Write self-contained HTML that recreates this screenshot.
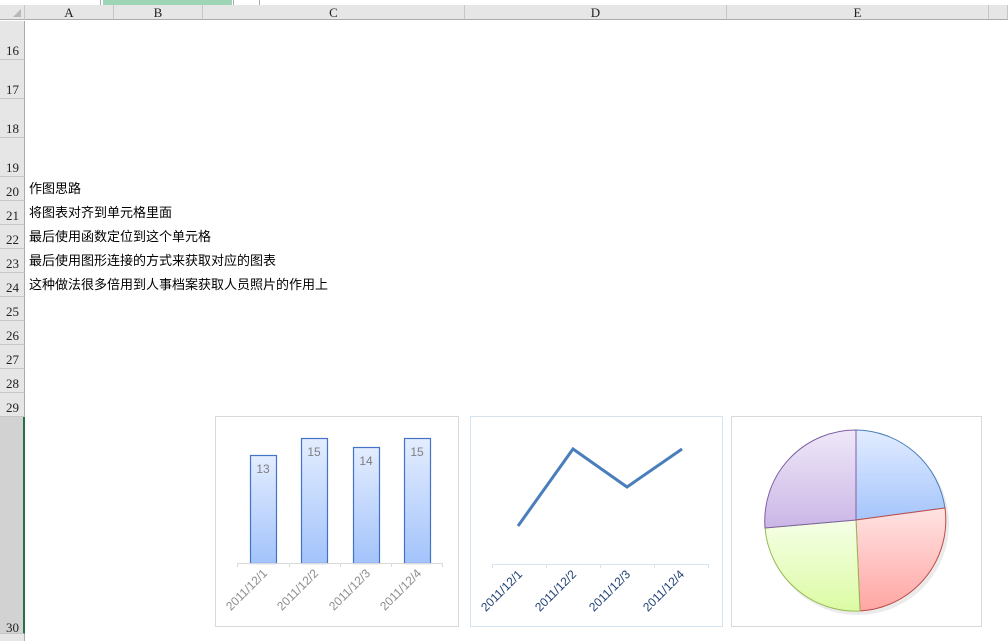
<!DOCTYPE html><html><head><meta charset="utf-8"><style>
html,body{margin:0;width:1008px;height:641px;overflow:hidden;background:#fff;font-family:"Liberation Sans","Noto Sans CJK SC",sans-serif;position:relative}
.a{position:absolute}
.ch{top:5px;height:15px;background:#e6e6e6;border-right:1px solid #c6c6c6;border-bottom:1px solid #ababab;box-sizing:border-box;font:13px "Liberation Serif",serif;text-align:center;line-height:15px;color:#222}
.rh{left:0;width:25px;background:#e6e6e6;border-bottom:1px solid #c6c6c6;border-right:1px solid #ababab;box-sizing:border-box;font:13px "Liberation Serif",serif;color:#222;text-align:left;padding-left:6px}
.t{left:29px;font-size:13px;color:#000;white-space:nowrap}
</style></head><body>
<div class="a" style="left:103px;top:0;width:129px;height:5px;background:#9fd5b7"></div>
<div class="a" style="left:100px;top:0;width:1px;height:5px;background:#aaa"></div>
<div class="a" style="left:233px;top:0;width:1px;height:5px;background:#aaa"></div>
<div class="a" style="left:259px;top:0;width:1px;height:5px;background:#aaa"></div>
<div class="a ch" style="left:0;width:25px"></div>
<div class="a" style="left:13px;top:9px;width:0;height:0;border-left:8px solid transparent;border-bottom:8px solid #b8b8b8"></div>
<div class="a ch" style="left:25px;width:89px">A</div>
<div class="a ch" style="left:114px;width:89px">B</div>
<div class="a ch" style="left:203px;width:262px">C</div>
<div class="a ch" style="left:465px;width:262px">D</div>
<div class="a ch" style="left:727px;width:262px">E</div>
<div class="a ch" style="left:989px;width:19px"></div>
<div class="a rh" style="top:21px;height:39px;line-height:60px">16</div>
<div class="a rh" style="top:60px;height:39px;line-height:60px">17</div>
<div class="a rh" style="top:99px;height:39px;line-height:60px">18</div>
<div class="a rh" style="top:138px;height:39px;line-height:60px">19</div>
<div class="a rh" style="top:177px;height:24px;line-height:30px">20</div>
<div class="a rh" style="top:201px;height:24px;line-height:30px">21</div>
<div class="a rh" style="top:225px;height:24px;line-height:30px">22</div>
<div class="a rh" style="top:249px;height:24px;line-height:30px">23</div>
<div class="a rh" style="top:273px;height:24px;line-height:30px">24</div>
<div class="a rh" style="top:297px;height:24px;line-height:30px">25</div>
<div class="a rh" style="top:321px;height:24px;line-height:30px">26</div>
<div class="a rh" style="top:345px;height:24px;line-height:30px">27</div>
<div class="a rh" style="top:369px;height:24px;line-height:30px">28</div>
<div class="a rh" style="top:393px;height:24px;line-height:30px">29</div>
<div class="a rh" style="top:417px;height:217px;line-height:422px;background:#d2d2d2;border-right:2px solid #217346">30</div>
<div class="a rh" style="top:634px;height:10px"></div>
<div class="a t" style="top:178px">作图思路</div>
<div class="a t" style="top:202px">将图表对齐到单元格里面</div>
<div class="a t" style="top:226px">最后使用函数定位到这个单元格</div>
<div class="a t" style="top:250px">最后使用图形连接的方式来获取对应的图表</div>
<div class="a t" style="top:274px">这种做法很多倍用到人事档案获取人员照片的作用上</div>
<svg class="a" style="left:0;top:0" width="1008" height="641">
<defs>
<linearGradient id="gb" x1="0" y1="0" x2="0" y2="1"><stop offset="0" stop-color="#e3edff"/><stop offset="1" stop-color="#a3c3fb"/></linearGradient>
<linearGradient id="p1" x1="0" y1="0" x2="0" y2="1"><stop offset="0" stop-color="#e2ecff"/><stop offset="1" stop-color="#a5c5fc"/></linearGradient>
<linearGradient id="p2" x1="0" y1="0" x2="0" y2="1"><stop offset="0" stop-color="#ffe3e3"/><stop offset="1" stop-color="#ffa6a3"/></linearGradient>
<linearGradient id="p3" x1="0" y1="0" x2="0" y2="1"><stop offset="0" stop-color="#f5ffe6"/><stop offset="1" stop-color="#dcfba4"/></linearGradient>
<linearGradient id="p4" x1="0" y1="0" x2="0" y2="1"><stop offset="0" stop-color="#efe8f8"/><stop offset="1" stop-color="#cbb6e6"/></linearGradient>
</defs>
<rect x="215.5" y="416.5" width="243" height="210" fill="#fff" stroke="#d9d9d9"/>
<rect x="470.5" y="416.5" width="252" height="210" fill="#fff" stroke="#d6e4f0"/>
<rect x="731.5" y="416.5" width="250" height="210" fill="#fff" stroke="#d9d9d9"/>
<g stroke="#4472c4" stroke-width="1.2" fill="url(#gb)">
<rect x="250.5" y="455.5" width="26" height="108"/><rect x="301.5" y="438.5" width="26" height="125"/>
<rect x="353.5" y="447.5" width="26" height="116"/><rect x="404.5" y="438.5" width="26" height="125"/></g>
<g fill="#7f7f7f" font-size="12" font-family="Liberation Sans,sans-serif" text-anchor="middle">
<text x="263" y="473">13</text><text x="314" y="456">15</text><text x="366" y="465">14</text><text x="417" y="456">15</text></g>
<path d="M237 563.5H443M237.5 563v4M289.5 563v4M340.5 563v4M391.5 563v4M442.5 563v4" stroke="#d9d9d9"/>
<g fill="#8c8c8c" font-size="12" font-family="Liberation Sans,sans-serif" text-anchor="end">
<text transform="translate(268,574) rotate(-45)">2011/12/1</text><text transform="translate(319,574) rotate(-45)">2011/12/2</text>
<text transform="translate(371,574) rotate(-45)">2011/12/3</text><text transform="translate(422,574) rotate(-45)">2011/12/4</text></g>
<path d="M492 564.5H708M492.5 564v4M546.5 564v4M600.5 564v4M654.5 564v4M708.5 564v4" stroke="#d6e4f0"/>
<path d="M518 526L573 449L627 487L682 449" fill="none" stroke="#4a7ebb" stroke-width="3"/>
<g fill="#1f3f73" font-size="12" font-family="Liberation Sans,sans-serif" text-anchor="end">
<text transform="translate(523,575) rotate(-45)">2011/12/1</text><text transform="translate(577,575) rotate(-45)">2011/12/2</text>
<text transform="translate(631,575) rotate(-45)">2011/12/3</text><text transform="translate(685,575) rotate(-45)">2011/12/4</text></g>
<circle cx="858" cy="524" r="91" fill="#000" opacity="0.08"/>
<path d="M856 520L856 430A91 91 0 0 1 945 508Z" fill="url(#p1)" stroke="#4a7ebb"/>
<path d="M856 520L945 508A91 91 0 0 1 860 611Z" fill="url(#p2)" stroke="#be4b48"/>
<path d="M856 520L860 611A91 91 0 0 1 765 528Z" fill="url(#p3)" stroke="#98b954"/>
<path d="M856 520L765 528A91 91 0 0 1 856 430Z" fill="url(#p4)" stroke="#7d60a0"/>
</svg>
</body></html>
